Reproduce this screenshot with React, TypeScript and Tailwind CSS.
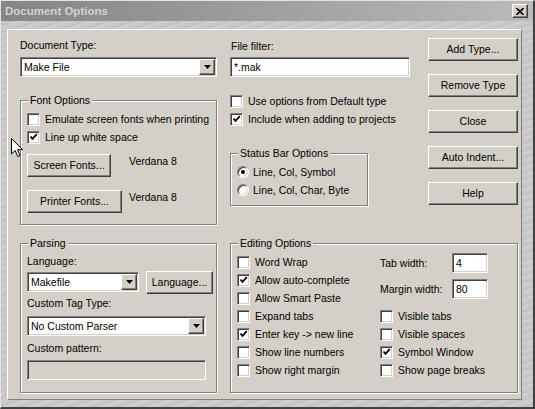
import React from 'react';

const sunken =
  'border border-t-[#808080] border-l-[#808080] border-b-white border-r-white shadow-[inset_1px_1px_0_#404040,inset_-1px_-1px_0_#d4d0c8]';
const raised =
  'border border-t-white border-l-white border-b-[#404040] border-r-[#404040] shadow-[inset_-1px_-1px_0_#808080] bg-[#d4d0c8]';

function Check({ checked = false }: { checked?: boolean }) {
  return (
    <span className={`flex h-[13px] w-[13px] shrink-0 items-center justify-center bg-white ${sunken}`}>
      {checked && (
        <svg width="9" height="9" viewBox="0 0 9 9">
          <path d="M1.5 3.5 L3.5 5.8 L7.8 1.2" fill="none" stroke="#000" strokeWidth="1.8" />
        </svg>
      )}
    </span>
  );
}

function CheckRow({ label, checked }: { label: string; checked?: boolean }) {
  return (
    <div className="flex h-[18px] items-center">
      <Check checked={checked} />
      <span className="ml-[5px] whitespace-nowrap">{label}</span>
    </div>
  );
}

function RadioRow({ label, checked }: { label: string; checked?: boolean }) {
  return (
    <div className="flex h-[18px] items-center">
      <span
        className={`flex h-[12px] w-[12px] shrink-0 items-center justify-center rounded-full bg-white ${sunken}`}
      >
        {checked && <span className="h-[4px] w-[4px] rounded-full bg-black" />}
      </span>
      <span className="ml-[4px] whitespace-nowrap">{label}</span>
    </div>
  );
}

function Button({ label, className = '' }: { label: string; className?: string }) {
  return (
    <div className={`flex h-[23px] items-center justify-center ${raised} ${className}`}>
      <span className="whitespace-nowrap">{label}</span>
    </div>
  );
}

function Combo({ value, className = '' }: { value: string; className?: string }) {
  return (
    <div className={`flex h-[20px] items-center bg-white p-[1px] ${sunken} ${className}`}>
      <span className="flex-1 pl-[2px] whitespace-nowrap">{value}</span>
      <span className={`flex h-[16px] w-[16px] items-center justify-center ${raised}`}>
        <svg width="7" height="4" viewBox="0 0 7 4">
          <path d="M0 0 H7 L3.5 4 Z" fill="#000" />
        </svg>
      </span>
    </div>
  );
}

function Edit({ value = '', className = '', disabled = false }: { value?: string; className?: string; disabled?: boolean }) {
  return (
    <div
      className={`flex h-[20px] items-center pl-[3px] ${disabled ? 'bg-[#d4d0c8]' : 'bg-white'} ${sunken} ${className}`}
    >
      <span className="whitespace-nowrap">{value}</span>
    </div>
  );
}

function Group({ title, className = '', children }: { title: string; className?: string; children: React.ReactNode }) {
  return (
    <div className={`relative border border-[#808080] shadow-[1px_1px_0_white,inset_1px_1px_0_white] ${className}`}>
      <span className="absolute -top-[7px] left-[7px] bg-[#d4d0c8] px-[2px] leading-[13px]">{title}</span>
      {children}
    </div>
  );
}

export default function App() {
  return (
    <div
      className="relative h-[409px] w-[535px] overflow-hidden border-t border-l border-r-2 border-b-2 border-t-[#e4e4e4] border-l-[#e4e4e4] border-r-[#404040] border-b-[#404040] bg-[#c6c6c6] bg-[repeating-linear-gradient(163deg,#cbcbcb_0px,#c1c1c1_2px,#d1d1d1_4px,#c6c6c6_7px)] text-[10.5px] leading-[13px] text-black"
      style={{ fontFamily: '"Liberation Sans", Arial, sans-serif' }}
    >
      {/* Title bar */}
      <div className="flex h-[20px] items-center bg-gradient-to-r from-[#858585] to-[#bababa] pl-[4px] pr-[5px]">
        <span className="flex-1 text-[11.5px] font-bold text-[#d6d2ca]">Document Options</span>
        <span className={`flex h-[14px] w-[16px] items-center justify-center ${raised}`}>
          <svg width="8" height="7" viewBox="0 0 8 7">
            <path d="M0.5 0 L7.5 7 M7.5 0 L0.5 7" stroke="#000" strokeWidth="1.6" />
          </svg>
        </span>
      </div>

      {/* Panel */}
      <div className="ml-[6px] mt-[8px] h-[371px] w-[515px] border border-t-white border-l-white border-b-[#808080] border-r-[#808080] bg-[#d4d0c8] pl-[12px] pt-[8px]">
        <div className="flex h-[187px] items-start">
          {/* Left column */}
          <div className="mt-[1px] w-[197px]">
            <div>Document Type:</div>
            <Combo value="Make File" className="mt-[5px] w-full" />
            <Group title="Font Options" className="mt-[23px] h-[125px] pl-[6px] pt-[9px]">
              <CheckRow label="Emulate screen fonts when printing" />
              <CheckRow label="Line up white space" checked />
              <div className="mt-[8px] flex items-start">
                <div className="w-[102px]">
                  <Button label="Screen Fonts..." className="w-[84px]" />
                </div>
                <span className="mt-[1px]">Verdana 8</span>
              </div>
              <div className="mt-[13px] flex items-start">
                <div className="w-[102px]">
                  <Button label="Printer Fonts..." className="w-[95px]" />
                </div>
                <span className="mt-[1px]">Verdana 8</span>
              </div>
            </Group>
          </div>

          {/* Middle column */}
          <div className="ml-[13px] mt-[2px] w-[180px]">
            <div className="pl-[1px]">File filter:</div>
            <Edit value="*.mak" className="mt-[4px] w-full" />
            <div className="mt-[15px]">
              <CheckRow label="Use options from Default type" />
              <CheckRow label="Include when adding to projects" checked />
            </div>
            <Group title="Status Bar Options" className="mt-[25px] h-[53px] w-[138px] pl-[6px] pt-[9px]">
              <RadioRow label="Line, Col, Symbol" checked />
              <RadioRow label="Line, Col, Char, Byte" />
            </Group>
          </div>

          {/* Buttons */}
          <div className="ml-[18px] flex w-[90px] flex-col gap-[13px]">
            <Button label="Add Type..." />
            <Button label="Remove Type" />
            <Button label="Close" />
            <Button label="Auto Indent..." />
            <Button label="Help" />
          </div>
        </div>

        <div className="mt-[18px] flex items-start">
          <Group title="Parsing" className="h-[150px] w-[197px] pl-[6px] pt-[11px]">
            <div>Language:</div>
            <div className="mt-[3px] flex items-start">
              <Combo value="Makefile" className="mt-[1px] w-[112px]" />
              <Button label="Language..." className="ml-[7px] w-[67px]" />
            </div>
            <div className="mt-[3px]">Custom Tag Type:</div>
            <Combo value="No Custom Parser" className="mt-[6px] w-[179px]" />
            <div className="mt-[6px]">Custom pattern:</div>
            <Edit disabled className="mt-[5px] w-[179px]" />
          </Group>

          <Group title="Editing Options" className="ml-[13px] flex h-[150px] w-[288px] pl-[6px] pt-[9px]">
            <div className="w-[143px]">
              <CheckRow label="Word Wrap" />
              <CheckRow label="Allow auto-complete" checked />
              <CheckRow label="Allow Smart Paste" />
              <CheckRow label="Expand tabs" />
              <CheckRow label="Enter key -> new line" checked />
              <CheckRow label="Show line numbers" />
              <CheckRow label="Show right margin" />
            </div>
            <div>
              <div className="flex h-[20px] items-center">
                <span className="w-[72px]">Tab width:</span>
                <Edit value="4" className="w-[36px]" />
              </div>
              <div className="mt-[6px] flex h-[20px] items-center">
                <span className="w-[72px]">Margin width:</span>
                <Edit value="80" className="w-[36px]" />
              </div>
              <div className="mt-[8px]">
                <CheckRow label="Visible tabs" />
                <CheckRow label="Visible spaces" />
                <CheckRow label="Symbol Window" checked />
                <CheckRow label="Show page breaks" />
              </div>
            </div>
          </Group>
        </div>
      </div>

      {/* Mouse pointer */}
      <svg className="absolute left-[10px] top-[137px]" width="13" height="20" viewBox="0 0 13 20">
        <path d="M0.5 0.5 L0.5 16 L4.2 12.5 L6.7 18.5 L9 17.5 L6.5 11.7 L11.5 11.7 Z" fill="#fff" stroke="#000" strokeWidth="1" />
      </svg>
    </div>
  );
}
